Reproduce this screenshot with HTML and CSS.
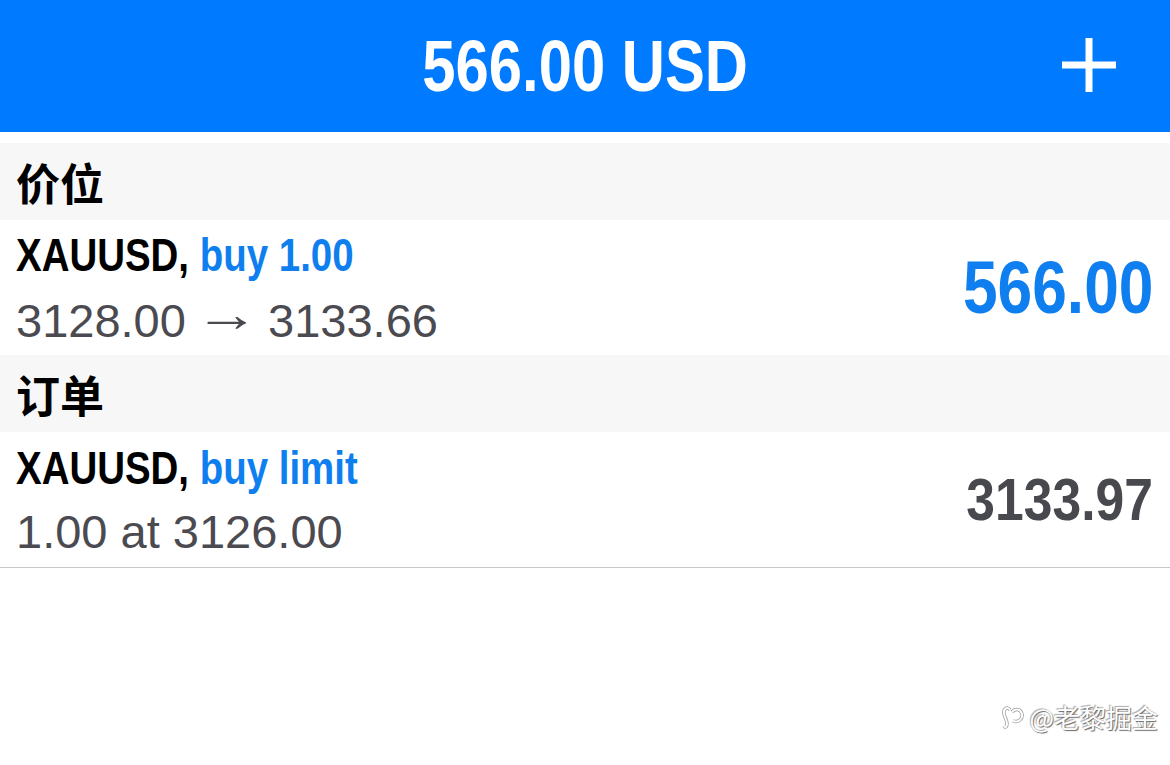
FILE: index.html
```html
<!DOCTYPE html>
<html lang="zh">
<head>
    <meta charset="utf-8">
    <title>Trade</title>
    <link rel="stylesheet" href="styles.css">
</head>
<body>
    <div class="header">
        <div></div>
        <div class="title">566.00 USD</div>
        <div class="add">
            <svg width="54" height="54" viewBox="0 0 54 54">
                <rect x="23.5" y="0" width="7" height="54" fill="#fff"/>
                <rect x="0" y="23.5" width="54" height="7" fill="#fff"/>
            </svg>
        </div>
    </div>

    <div class="gap"></div>

    <div class="section">价位</div>
    <div class="row">
        <div class="info">
            <div class="line1">XAUUSD, <span class="blue">buy 1.00</span></div>
            <div class="line2">3128.00 <span class="arrow">→</span> 3133.66</div>
        </div>
        <div class="value profit">566.00</div>
    </div>

    <div class="section">订单</div>
    <div class="row last">
        <div class="info">
            <div class="line1">XAUUSD, <span class="blue">buy limit</span></div>
            <div class="line2">1.00 at 3126.00</div>
        </div>
        <div class="value price">3133.97</div>
    </div>

    <div class="watermark">
        <svg width="24" height="26" viewBox="0 0 24 26">
            <path d="M9 6 C6 2 2 5 3 10 C4 14 6 16 6 20 C6 23 4 24 3 22" fill="none" stroke="#999" stroke-width="3.4"/>
            <path d="M11 8 C14 4 20 5 21 10 C22 15 17 19 12 17" fill="none" stroke="#999" stroke-width="3.4"/>
            <path d="M9 6 C6 2 2 5 3 10 C4 14 6 16 6 20 C6 23 4 24 3 22" fill="none" stroke="#fff" stroke-width="2"/>
            <path d="M11 8 C14 4 20 5 21 10 C22 15 17 19 12 17" fill="none" stroke="#fff" stroke-width="2"/>
        </svg>
        <span>@老黎掘金</span>
    </div>
</body>
</html>
```

FILE: styles.css
```css
body {
    margin: 0;
    background-color: #fff;
    font-family: "Liberation Sans", Arial, "Noto Sans CJK SC", sans-serif;
    color: #000;
    position: relative;
    height: 765px;
    overflow: hidden;
}
.header {
    height: 132px;
    background-color: #007aff;
    display: grid;
    grid-template-columns: 1fr auto 1fr;
    align-items: center;
}
.title {
    font-weight: bold;
    font-size: 72px;
    color: #fff;
    line-height: 1;
    transform: scaleX(0.83);
}
.add {
    justify-self: end;
    padding-right: 54px;
    height: 54px;
    margin-top: -2px;
}
.gap {
    height: 11px;
}
.section {
    height: 77px;
    background-color: #f7f7f7;
    display: flex;
    align-items: center;
    padding-left: 16px;
    font-family: "Noto Sans CJK SC", sans-serif;
    font-weight: bold;
    font-size: 44px;
    color: #000;
}
.row {
    height: 135px;
    box-sizing: border-box;
    display: flex;
    align-items: center;
    justify-content: space-between;
    padding: 0 17px 0 16px;
}
.row.last {
    border-bottom: 1px solid #c8c8cc;
    height: 136px;
}
.line1 {
    font-weight: bold;
    font-size: 47px;
    line-height: 64px;
    white-space: nowrap;
    transform: scaleX(0.818);
    transform-origin: left center;
}
.line2 {
    font-size: 47px;
    line-height: 64px;
    color: #4a4a50;
    white-space: nowrap;
}
.arrow {
    display: inline-block;
    font-family: "Noto Sans", sans-serif;
    font-size: 50px;
    line-height: 1;
    vertical-align: 6px;
    transform: scaleX(1.3);
    margin: 0 3px;
}
.blue {
    color: #0f7ff0;
}
.value {
    font-weight: bold;
    line-height: 1;
    transform-origin: right center;
}
.profit {
    font-size: 75px;
    color: #0f7ff0;
    transform: scaleX(0.83);
}
.price {
    font-size: 60px;
    color: #48484f;
    transform: scaleX(0.86);
}
.watermark {
    position: absolute;
    right: 12px;
    bottom: 30px;
    display: flex;
    align-items: center;
    gap: 4px;
    font-family: "Noto Sans CJK SC", sans-serif;
    font-size: 26px;
    color: #fff;
    text-shadow: 1px 1px 1px #666, -1px -1px 1px #aaa;
}
```
